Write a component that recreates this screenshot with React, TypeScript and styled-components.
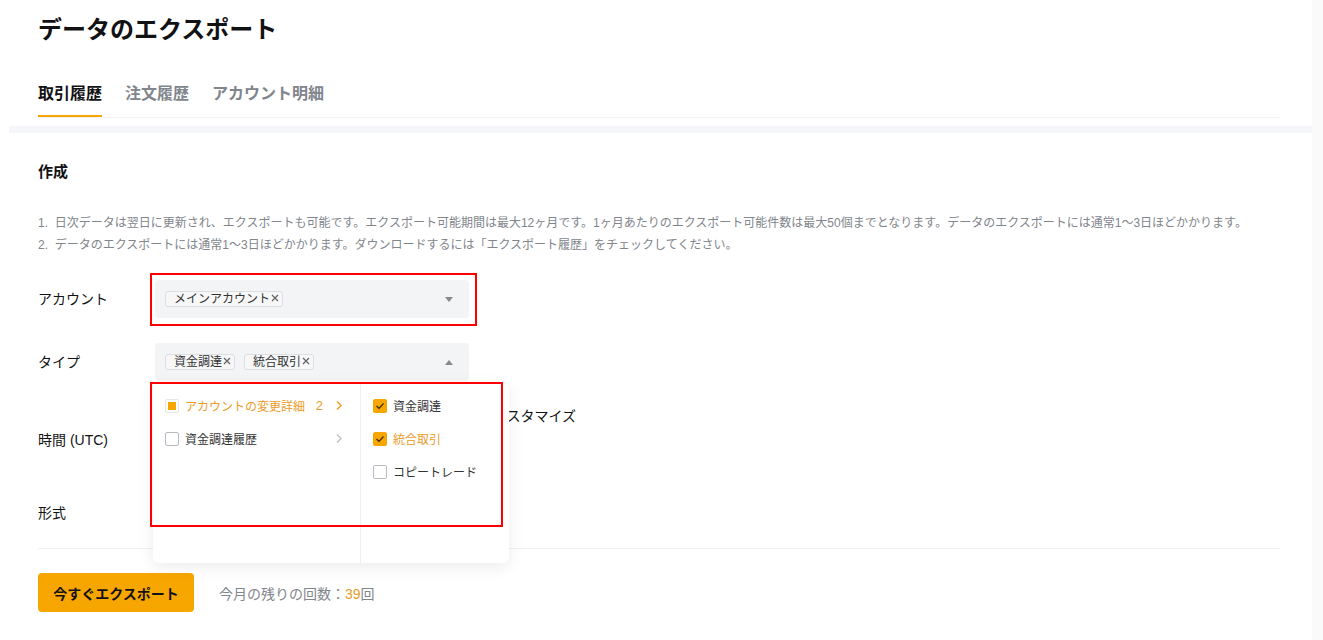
import styled, { createGlobalStyle } from "styled-components";

const GlobalStyle = createGlobalStyle`
    body {
        margin: 0;
        background: #fafafa;
        font-family: "Liberation Sans", "Noto Sans CJK JP", sans-serif;
        color: #121214;
    }
`;

const ORANGE = "#f7a600";
const ORANGE_TEXT = "#eb9b2a";
const GRAY = "#81858c";

const Page = styled.div`
    width: 1312px;
    min-height: 640px;
    background: #ffffff;
`;

const Header = styled.div`
    padding: 16px 32px 0 38px;
`;

const Title = styled.h1`
    margin: 0;
    font-size: 24px;
    line-height: 28px;
    font-weight: 700;
`;

const TabBar = styled.div`
    display: flex;
    gap: 23px;
    margin-top: 39px;
    border-bottom: 1px solid #f2f2f2;
`;

const Tab = styled.div<{ $active?: boolean }>`
    font-size: 16px;
    line-height: 22px;
    font-weight: 700;
    padding-bottom: 10px;
    color: ${(p) => (p.$active ? "#121214" : GRAY)};
    border-bottom: 2px solid ${(p) => (p.$active ? ORANGE : "transparent")};
`;

const Band = styled.div`
    margin: 8px 0 0 9px;
    height: 7px;
    background: #f5f6fa;
`;

const Section = styled.div`
    padding: 0 32px 0 38px;
`;

const SectionTitle = styled.h2`
    margin: 29px 0 0;
    font-size: 15px;
    line-height: 20px;
    font-weight: 700;
`;

const Notes = styled.ol`
    margin: 30px 0 0;
    padding: 0;
    list-style: none;
    font-size: 12px;
    line-height: 22px;
    color: ${GRAY};
`;

const Row = styled.div<{ $gap: number }>`
    position: relative;
    display: flex;
    align-items: center;
    margin-top: ${(p) => p.$gap}px;
`;

const Label = styled.div`
    width: 117px;
    flex-shrink: 0;
    font-size: 14px;
    line-height: 20px;
`;

const Control = styled.div`
    position: relative;
`;

const Select = styled.div<{ $marked?: boolean }>`
    position: relative;
    box-sizing: border-box;
    width: 314px;
    height: 38px;
    padding: 0 16px 0 10px;
    display: flex;
    align-items: center;
    gap: 9px;
    background: #f3f4f6;
    border-radius: 4px;

    ${(p) =>
        p.$marked &&
        `&::after {
            content: "";
            position: absolute;
            left: -5px;
            top: -7px;
            right: -8px;
            bottom: -8px;
            border: 2px solid #f00;
        }`}
`;

const Tag = styled.span`
    display: inline-flex;
    align-items: flex-start;
    gap: 1px;
    height: 16px;
    box-sizing: border-box;
    padding: 0 3px 0 8px;
    border: 1px solid #dcdee2;
    border-radius: 3px;
    background: #f7f7f8;
    font-size: 12px;
    line-height: 14px;
    color: #333;
`;

const Caret = styled.svg`
    margin-left: auto;
`;

const TimeBlock = styled.div`
    display: flex;
    flex-direction: column;
    gap: 10px;
`;

const RadioGroup = styled.div`
    display: flex;
    width: 421px;
    justify-content: flex-end;
    font-size: 14px;
    line-height: 20px;
`;

const Radio = styled.label`
    display: inline-flex;
    align-items: center;
    gap: 6px;

    &::before {
        content: "";
        width: 12px;
        height: 12px;
        border: 1px solid #c4c6cc;
        border-radius: 50%;
    }
`;

const Field = styled.div`
    width: 314px;
    height: 38px;
    border-radius: 4px;
    background: #f3f4f6;
`;

const Dropdown = styled.div`
    position: absolute;
    top: 40px;
    left: -2px;
    z-index: 10;
    width: 356px;
    height: 180px;
    display: grid;
    grid-template-columns: 208px 1fr;
    background: #ffffff;
    border-radius: 6px;
    box-shadow: 0 4px 16px rgba(0, 0, 0, 0.08);

    &::after {
        content: "";
        position: absolute;
        left: -3px;
        top: -1px;
        width: 353px;
        height: 145px;
        box-sizing: border-box;
        border: 2px solid #f00;
    }
`;

const Column = styled.div<{ $divider?: boolean }>`
    padding: 6px 17px 0 12px;
    border-right: ${(p) => (p.$divider ? "1px solid #f0f0f2" : "none")};
`;

const Option = styled.div<{ $active?: boolean }>`
    display: flex;
    align-items: center;
    gap: 6px;
    height: 33px;
    white-space: nowrap;
    font-size: 12px;
    color: ${(p) => (p.$active ? ORANGE_TEXT : "#333")};
`;

const Count = styled.span`
    margin-left: auto;
    margin-right: 6px;
    font-size: 13px;
`;

const Box = styled.span<{ $state: "empty" | "partial" | "checked" }>`
    width: 14px;
    height: 14px;
    box-sizing: border-box;
    border-radius: 2px;
    display: inline-flex;
    align-items: center;
    justify-content: center;
    flex-shrink: 0;
    background: ${(p) => (p.$state === "checked" ? ORANGE : "#fff")};
    border: 1px solid ${(p) =>
        p.$state === "checked" ? ORANGE : p.$state === "partial" ? "#e6e6e6" : "#b8bbc2"};

    ${(p) =>
        p.$state === "partial" &&
        `&::after {
            content: "";
            width: 8px;
            height: 8px;
            background: ${ORANGE};
        }`}
`;

const Divider = styled.div`
    margin-top: 16px;
    height: 1px;
    background: #f0f0f2;
`;

const Footer = styled.div`
    display: flex;
    align-items: center;
    gap: 25px;
    margin-top: 24px;
`;

const ExportButton = styled.button`
    width: 156px;
    height: 39px;
    border: none;
    border-radius: 4px;
    background: ${ORANGE};
    font-family: inherit;
    font-size: 14px;
    font-weight: 700;
    color: #121214;
`;

const Remaining = styled.span`
    font-size: 14px;
    color: ${GRAY};

    b {
        font-weight: 400;
        color: ${ORANGE_TEXT};
    }
`;

const Close = () => (
    <svg width="8" height="8" viewBox="0 0 8 8" style={{ marginTop: 2 }}>
        <path d="M1 1L7 7M7 1L1 7" stroke="#666" strokeWidth="1.3" />
    </svg>
);

const Chevron = ({ color }: { color: string }) => (
    <svg width="8" height="11" viewBox="0 0 8 11">
        <path d="M2 1.5L6 5.5L2 9.5" fill="none" stroke={color} strokeWidth="1.4" />
    </svg>
);

const Check = () => (
    <svg width="10" height="8" viewBox="0 0 10 8">
        <path d="M1.5 4L4 6.3L8.5 1.5" fill="none" stroke="#3a2a00" strokeWidth="1.2" />
    </svg>
);

const CheckBox = ({ state }: { state: "empty" | "partial" | "checked" }) => (
    <Box $state={state}>{state === "checked" && <Check />}</Box>
);

export default function App() {
    return (
        <Page>
            <GlobalStyle />
            <Header>
                <Title>データのエクスポート</Title>
                <TabBar>
                    <Tab $active>取引履歴</Tab>
                    <Tab>注文履歴</Tab>
                    <Tab>アカウント明細</Tab>
                </TabBar>
            </Header>
            <Band />
            <Section>
                <SectionTitle>作成</SectionTitle>
                <Notes>
                    <li>1.&nbsp; 日次データは翌日に更新され、エクスポートも可能です。エクスポート可能期間は最大12ヶ月です。1ヶ月あたりのエクスポート可能件数は最大50個までとなります。データのエクスポートには通常1～3日ほどかかります。</li>
                    <li>2.&nbsp; データのエクスポートには通常1～3日ほどかかります。ダウンロードするには「エクスポート履歴」をチェックしてください。</li>
                </Notes>

                <Row $gap={24}>
                    <Label>アカウント</Label>
                    <Select $marked>
                        <Tag>メインアカウント<Close /></Tag>
                        <Caret width="8" height="5" viewBox="0 0 8 5">
                            <path d="M0 0H8L4 5Z" fill="#888" />
                        </Caret>
                    </Select>
                </Row>

                <Row $gap={25}>
                    <Label>タイプ</Label>
                    <Control>
                        <Select>
                            <Tag>資金調達<Close /></Tag>
                            <Tag>統合取引<Close /></Tag>
                            <Caret width="8" height="5" viewBox="0 0 8 5">
                                <path d="M0 5H8L4 0Z" fill="#888" />
                            </Caret>
                        </Select>
                        <Dropdown>
                            <Column $divider>
                                <Option $active>
                                    <CheckBox state="partial" />
                                    アカウントの変更詳細
                                    <Count>2</Count>
                                    <Chevron color={ORANGE_TEXT} />
                                </Option>
                                <Option>
                                    <CheckBox state="empty" />
                                    資金調達履歴
                                    <Count />
                                    <Chevron color="#c0c2c8" />
                                </Option>
                            </Column>
                            <Column>
                                <Option>
                                    <CheckBox state="checked" />
                                    資金調達
                                </Option>
                                <Option $active>
                                    <CheckBox state="checked" />
                                    統合取引
                                </Option>
                                <Option>
                                    <CheckBox state="empty" />
                                    コピートレード
                                </Option>
                            </Column>
                        </Dropdown>
                    </Control>
                </Row>

                <Row $gap={25}>
                    <Label>時間 (UTC)</Label>
                    <TimeBlock>
                        <RadioGroup>
                            <Radio>カスタマイズ</Radio>
                        </RadioGroup>
                        <Field />
                    </TimeBlock>
                </Row>

                <Row $gap={20}>
                    <Label>形式</Label>
                    <Field />
                </Row>

                <Divider />

                <Footer>
                    <ExportButton>今すぐエクスポート</ExportButton>
                    <Remaining>
                        今月の残りの回数：<b>39</b>回
                    </Remaining>
                </Footer>
            </Section>
        </Page>
    );
}
